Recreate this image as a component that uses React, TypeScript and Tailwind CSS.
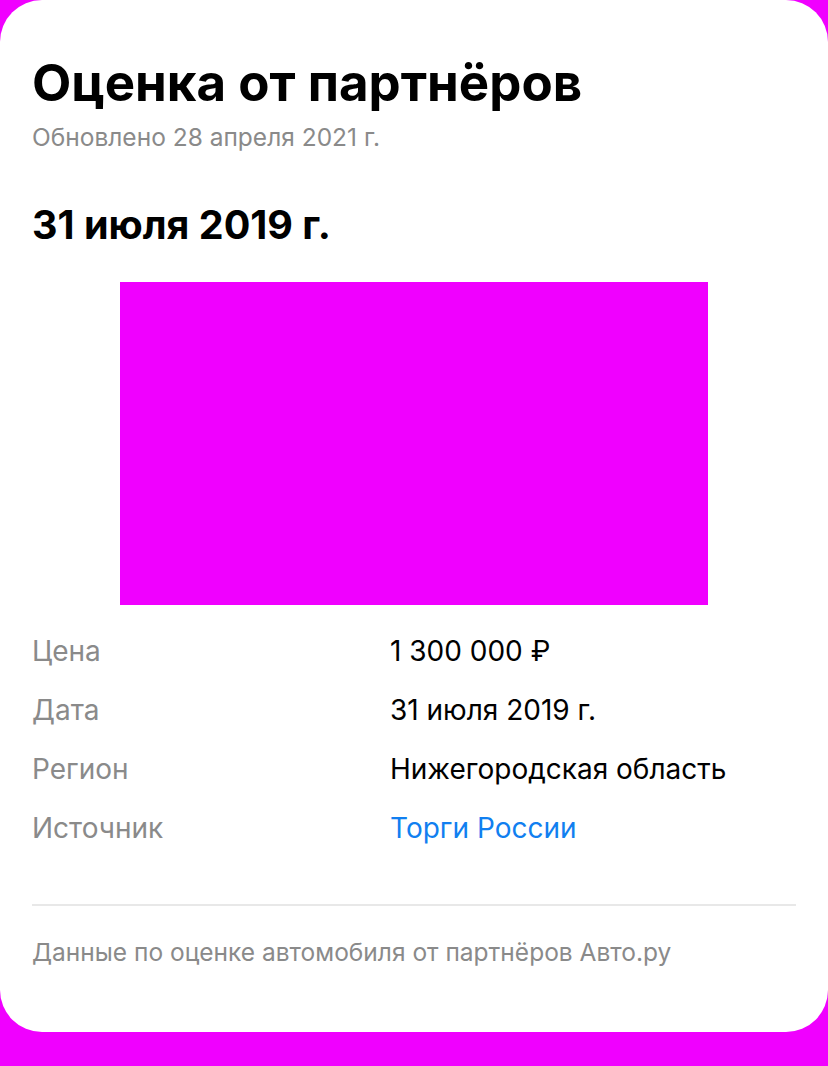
const rows: { label: string; value: string; link?: boolean }[] = [
  { label: 'Цена', value: '1 300 000 ₽' },
  { label: 'Дата', value: '31 июля 2019 г.' },
  { label: 'Регион', value: 'Нижегородская область' },
  { label: 'Источник', value: 'Торги России', link: true },
];

export default function App() {
  return (
    <div className="min-h-[1066px] bg-[#f000ff] font-['Inter',sans-serif]">
      <div className="h-[1032px] rounded-[42px] bg-white px-8 pt-[53px]">
        <h1 className="text-[51px] font-bold leading-[60px] text-black">Оценка от партнёров</h1>
        <p className="mt-[8px] text-[24.5px] leading-[32px] text-[#8a8a8a]">Обновлено 28 апреля 2021 г.</p>

        <h2 className="mt-[48px] text-[39.5px] font-bold leading-[48px] text-black">31 июля 2019 г.</h2>

        <div className="mt-[33px] flex justify-center">
          <div className="h-[323px] w-[588px] bg-[#f000ff]" />
        </div>

        <div className="mt-[28px] flex flex-col gap-[23px]">
          {rows.map((r) => (
            <div key={r.label} className="flex text-[28px] leading-[36px]">
              <span className="w-[358px] shrink-0 text-[#8a8a8a]">{r.label}</span>
              <span className={r.link ? 'text-[#117ff0]' : 'text-black'}>{r.value}</span>
            </div>
          ))}
        </div>

        <div className="mt-[58px] border-t-2 border-[#e8e8e8]" />

        <p className="mt-[30px] text-[24.5px] leading-[32px] text-[#8a8a8a]">
          Данные по оценке автомобиля от партнёров Авто.ру
        </p>
      </div>
    </div>
  );
}
